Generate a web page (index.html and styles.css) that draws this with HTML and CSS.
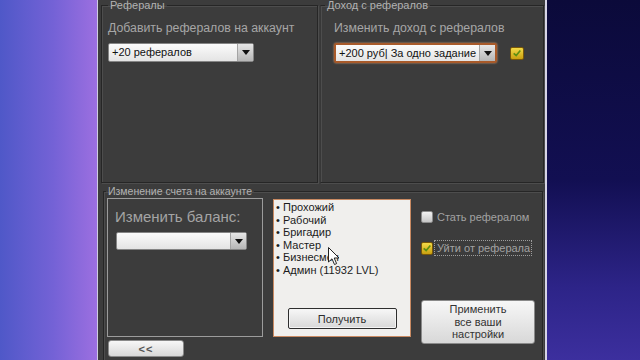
FILE: index.html
```html
<!DOCTYPE html>
<html lang="ru">
<head>
  <meta charset="UTF-8" />
  <meta name="viewport" content="width=device-width, initial-scale=1.0"/>
  <title>Рефералы</title>
  <link rel="stylesheet" href="styles.css">
</head>
<body>
  <div class="desktop">
    <div class="window">

      <!-- верхние группы -->
      <div class="top-row">
        <fieldset class="group group-refs">
          <legend>Рефералы</legend>
          <div class="group-body">
            <p class="caption">Добавить рефералов на аккаунт</p>
            <div class="combo combo-refs">
              <span class="combo-text">+20 рефералов</span>
              <span class="combo-arrow"></span>
            </div>
          </div>
        </fieldset>

        <fieldset class="group group-income">
          <legend>Доход с рефералов</legend>
          <div class="group-body">
            <p class="caption">Изменить доход с рефералов</p>
            <div class="combo-row">
              <div class="combo combo-active">
                <span class="combo-text">+200 руб| За одно задание</span>
                <span class="combo-arrow"></span>
              </div>
              <span class="check check-big checked">
                <svg viewBox="0 0 12 12" width="10" height="10"><path d="M2 6.5 L5 9 L10 3" fill="none" stroke="#5f8f12" stroke-width="2"/></svg>
              </span>
            </div>
          </div>
        </fieldset>
      </div>

      <!-- счет -->
      <fieldset class="group group-account">
        <legend>Изменение счета на аккаунте</legend>
        <div class="account-grid">
          <div class="balance-col">
            <div class="balance-panel">
              <p class="balance-title">Изменить баланс:</p>
              <div class="combo combo-balance">
                <span class="combo-text"></span>
                <span class="combo-arrow"></span>
              </div>
            </div>
            <button class="btn btn-back">&lt;&lt;</button>
          </div>

          <div class="rank-list">
            <ul>
              <li>Прохожий</li>
              <li>Рабочий</li>
              <li>Бригадир</li>
              <li>Мастер</li>
              <li>Бизнесмен</li>
              <li>Админ (11932 LVL)</li>
            </ul>
            <button class="btn btn-get">Получить</button>
            <svg class="mouse" viewBox="0 0 12 19" width="12" height="19">
              <path d="M0.5 0.5 L0.5 15 L4 11.8 L6.5 17.5 L8.6 16.6 L6.2 11 L11 11 Z" fill="#fff" stroke="#222" stroke-width="1"/>
            </svg>
          </div>

          <div class="options">
            <label class="option"><span class="check"></span>Стать рефералом</label>
            <label class="option option-second">
              <span class="check checked">
                <svg viewBox="0 0 12 12" width="10" height="10"><path d="M2 6.5 L5 9 L10 3" fill="none" stroke="#5f8f12" stroke-width="2"/></svg>
              </span>
              <span class="focus-text">Уйти от реферала</span>
            </label>
            <button class="btn btn-apply">Применить<br>все ваши<br>настройки</button>
          </div>
        </div>
      </fieldset>

    </div>
  </div>
</body>
</html>
```

FILE: styles.css
```css
* {
  margin: 0;
  padding: 0;
  box-sizing: border-box;
}
html, body {
  height: 100%;
  overflow: hidden;
  font-family: "Liberation Sans", Arial, sans-serif;
}
.desktop {
  width: 640px;
  height: 360px;
  display: flex;
  background:
    linear-gradient(180deg, #0b0a3a 0%, #120f52 50%, #2d2488 80%, #3c2f9e 100%) right top / 93px 100% no-repeat,
    linear-gradient(90deg, #4f58c8 0%, #7462d6 55%, #9c6fe0 100%) left top / 97px 100% no-repeat,
    #3c3c3c;
}
.window {
  margin-left: 97px;
  width: 450px;
  height: 360px;
  overflow: hidden;
  background: #3c3c3c;
  border-left: 1px solid #cfcde0;
  border-right: 2px solid #d6d4e6;
}

/* группы */
.group {
  border: 1px solid #262626;
  box-shadow: 1px 1px 0 #4d4d4d, inset 1px 1px 0 #4d4d4d;
  min-width: 0;
}
.group legend {
  font-size: 11px;
  line-height: 13px;
  color: #b2b2b2;
  padding: 0 2px;
}
.top-row {
  display: grid;
  grid-template-columns: 217px 224px;
  gap: 2px;
  padding-left: 3px;
  margin-top: -1px;
}
.top-row .group {
  height: 184px;
}
.group-refs legend {
  margin-left: 6px;
}
.group-income {
  border-left-color: #383838;
}
.group-income legend {
  margin-left: 4px;
}
.group-body {
  padding: 8px 0 0 6px;
}
.group-income .group-body {
  padding-left: 13px;
}
.caption {
  font-size: 12.3px;
  line-height: 16px;
  color: #a6a6a6;
}

/* выпадающие списки */
.combo {
  display: flex;
  height: 19px;
  margin-top: 7px;
  background: linear-gradient(#fbfbfb, #e4e4e4);
  border: 1px solid #858585;
  border-radius: 2px;
}
.combo-text {
  flex: 1;
  font-size: 11px;
  line-height: 17px;
  padding-left: 3px;
  color: #111;
  white-space: nowrap;
}
.combo-arrow {
  width: 16px;
  display: flex;
  align-items: center;
  justify-content: center;
  background: linear-gradient(#e6e6e6, #b6b6b6);
  border-left: 1px solid #a4a4a4;
}
.combo-arrow::after {
  content: "";
  border-left: 4px solid transparent;
  border-right: 4px solid transparent;
  border-top: 5px solid #111;
}
.combo-refs {
  width: 146px;
}
.combo-row {
  display: flex;
  align-items: center;
  gap: 13px;
  margin-top: 7px;
}
.combo-active {
  width: 163px;
  height: 20px;
  margin-top: 0;
  border: 2px solid #a85a2a;
  box-shadow: 0 0 2px #e6a878;
}
.combo-active .combo-text {
  line-height: 16px;
}

/* флажки */
.check {
  width: 12px;
  height: 12px;
  flex: none;
  display: inline-flex;
  align-items: center;
  justify-content: center;
  border: 1px solid #8c8c8c;
  border-radius: 2px;
  background: linear-gradient(#f2f2f2, #c6c6c6);
}
.check.checked {
  background: linear-gradient(#f3da48, #c9a010);
  border-color: #7a5808;
}
.check-big {
  width: 14px;
  height: 13px;
}

/* счет */
.group-account {
  margin: 2px 2px 0 5px;
  height: 200px;
}
.group-account legend {
  margin-left: 2px;
  font-size: 10.5px;
}
.account-grid {
  display: grid;
  grid-template-columns: 156px 138px 114px;
  column-gap: 10px;
  align-items: start;
  padding-left: 3px;
}
.balance-panel {
  height: 139px;
  border: 1px solid #9c9c9c;
  padding: 9px 0 0 7px;
}
.balance-title {
  font-size: 15px;
  line-height: 18px;
  color: #a4a4a4;
}
.combo-balance {
  width: 131px;
  height: 18px;
  margin: 6px 0 0 1px;
}

/* кнопки */
.btn {
  font-family: inherit;
  font-size: 11px;
  color: #2c2c2c;
  background: linear-gradient(#f7f7f7, #d8d8d8);
  border: 1px solid #8a8a8a;
  border-radius: 3px;
}
.btn-back {
  display: block;
  width: 76px;
  height: 17px;
  margin: 3px 0 0 1px;
  color: #555;
  font-weight: bold;
  letter-spacing: 1px;
}
.rank-list {
  position: relative;
  height: 138px;
  margin-top: 1px;
  display: flex;
  flex-direction: column;
  align-items: center;
  background: #f0efed;
  border: 1px solid #c98a62;
}
.rank-list ul {
  align-self: stretch;
  list-style: none;
  padding: 1px 0 0 2px;
  font-size: 11px;
  line-height: 12.6px;
  color: #1c1c1c;
}
.rank-list li::before {
  content: "•";
  display: inline-block;
  width: 7px;
}
.btn-get {
  width: 109px;
  height: 21px;
  margin-top: auto;
  margin-bottom: 7px;
  border: 1px solid #2e2e2e;
  border-radius: 2px;
  box-shadow: inset 0 0 0 1px #f4f4f4;
}
.mouse {
  position: absolute;
  left: 54px;
  top: 47px;
}

/* параметры */
.options {
  display: flex;
  flex-direction: column;
  padding-top: 11px;
}
.option {
  display: flex;
  align-items: center;
  gap: 4px;
  height: 16px;
  font-size: 11px;
  color: #a2a2a2;
}
.option-second {
  margin-top: 15px;
  gap: 1px;
}
.option-second .check {
  height: 13px;
}
.focus-text {
  border: 1px dotted #9c9c9c;
  padding: 0 1px 0 2px;
  line-height: 14px;
}
.btn-apply {
  width: 114px;
  height: 44px;
  margin-top: 44px;
  line-height: 12.5px;
  color: #333;
}
```
